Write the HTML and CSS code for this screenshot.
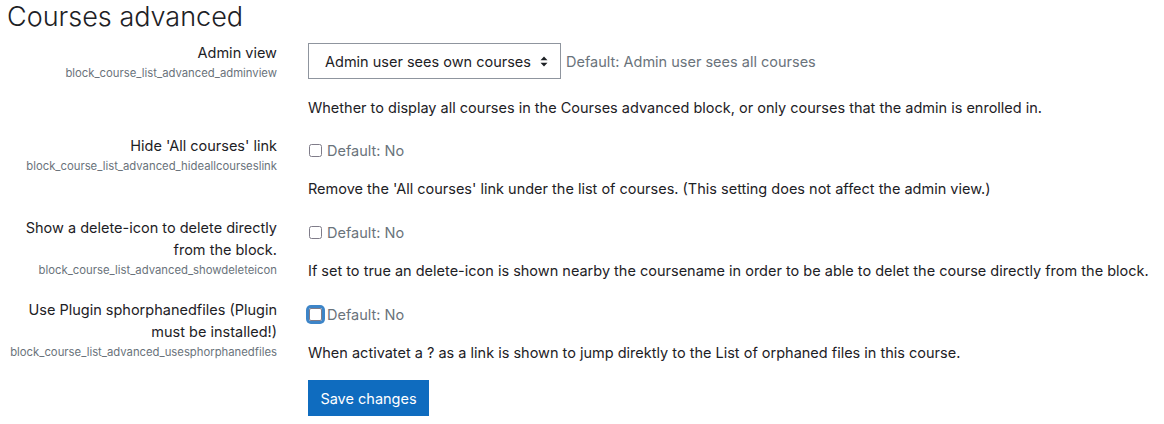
FILE: index.html
```html
<!DOCTYPE html>
<html>
<head>
	<title>Courses advanced</title>
	<meta charset="utf-8">
	<link rel="stylesheet" href="styles.css">
</head>
<body>
<div class="page">
	<h2 class="page-title">Courses advanced</h2>

	<form class="settings">
		<!-- admin view -->
		<div class="setting setting-first">
			<div class="setting-label">
				<label>Admin view</label>
				<span class="shortname">block_course_list_advanced_adminview</span>
			</div>
			<div class="setting-body">
				<div class="control control-select">
					<div class="select">
						<span>Admin user sees own courses</span>
						<svg width="8" height="11" viewBox="0 0 8 11"><path d="M4 0.5L7.5 4.2H0.5Z M4 10.5L7.5 6.8H0.5Z" fill="#1d2125"/></svg>
					</div>
					<span class="default">Default: Admin user sees all courses</span>
				</div>
				<div class="description">Whether to display all courses in the Courses advanced block, or only courses that the admin is enrolled in.</div>
			</div>
		</div>

		<!-- hide all courses link -->
		<div class="setting">
			<div class="setting-label">
				<label>Hide 'All courses' link</label>
				<span class="shortname">block_course_list_advanced_hideallcourseslink</span>
			</div>
			<div class="setting-body">
				<div class="control">
					<span class="checkbox"></span>
					<span class="default">Default: No</span>
				</div>
				<div class="description">Remove the 'All courses' link under the list of courses. (This setting does not affect the admin view.)</div>
			</div>
		</div>

		<!-- delete icon -->
		<div class="setting">
			<div class="setting-label">
				<label>Show a delete-icon to delete directly from the block.</label>
				<span class="shortname">block_course_list_advanced_showdeleteicon</span>
			</div>
			<div class="setting-body">
				<div class="control">
					<span class="checkbox"></span>
					<span class="default">Default: No</span>
				</div>
				<div class="description">If set to true an delete-icon is shown nearby the coursename in order to be able to delet the course directly from the block.</div>
			</div>
		</div>

		<!-- orphaned files -->
		<div class="setting">
			<div class="setting-label">
				<label>Use Plugin sphorphanedfiles (Plugin must be installed!)</label>
				<span class="shortname">block_course_list_advanced_usesphorphanedfiles</span>
			</div>
			<div class="setting-body">
				<div class="control">
					<span class="checkbox focused"></span>
					<span class="default">Default: No</span>
				</div>
				<div class="description">When activatet a ? as a link is shown to jump direktly to the List of orphaned files in this course.</div>
			</div>
		</div>

		<div class="setting">
			<div></div>
			<div class="setting-body">
				<button type="button" class="btn-save">Save changes</button>
			</div>
		</div>
	</form>
</div>
</body>
</html>
```

FILE: styles.css
```css
body {
	margin: 0;
	font-family: Inter, "Noto Sans", sans-serif;
	font-size: 14.5px;
	color: #1d2125;
	background: #fff;
}
.page {
	padding: 0 7px;
}
.page-title {
	margin: 0;
	padding-top: 0;
	font-size: 27px;
	font-weight: 300;
	line-height: 34px;
	height: 42px;
}

.setting {
	display: grid;
	grid-template-columns: 270px 1fr;
	column-gap: 31px;
	margin-bottom: 17px;
}
.setting-first {
	margin-bottom: 16px;
}
.setting-label {
	text-align: right;
	line-height: 22px;
}
.setting-label label {
	display: block;
}
.shortname {
	display: block;
	font-size: 11.3px;
	line-height: 18px;
	color: #6a737b;
}

.control {
	display: flex;
	align-items: center;
	height: 30px;
}
.control-select {
	height: 36px;
	margin-top: 1px;
}
.description {
	line-height: 22px;
	margin-top: 13px;
}
.control-select + .description {
	margin-top: 18px;
}
.default {
	color: #6a737b;
}

.select {
	box-sizing: border-box;
	display: flex;
	align-items: center;
	justify-content: space-between;
	width: 253px;
	height: 36px;
	padding: 0 12px 0 16px;
	border: 1px solid #8f959e;
	margin-right: 5px;
}

.checkbox {
	box-sizing: border-box;
	width: 13px;
	height: 13px;
	border: 1.5px solid #7f7c89;
	border-radius: 2.5px;
	margin: 0 5px 0 1px;
}
.checkbox.focused {
	box-shadow: 0 0 0 3px #3d85c8;
	border-radius: 2px;
}

.btn-save {
	height: 36px;
	width: 121px;
	padding: 0;
	border: 0;
	background: #0f6cbf;
	color: #fff;
	font-family: inherit;
	font-size: 14.5px;
	margin-top: -1px;
}
```
